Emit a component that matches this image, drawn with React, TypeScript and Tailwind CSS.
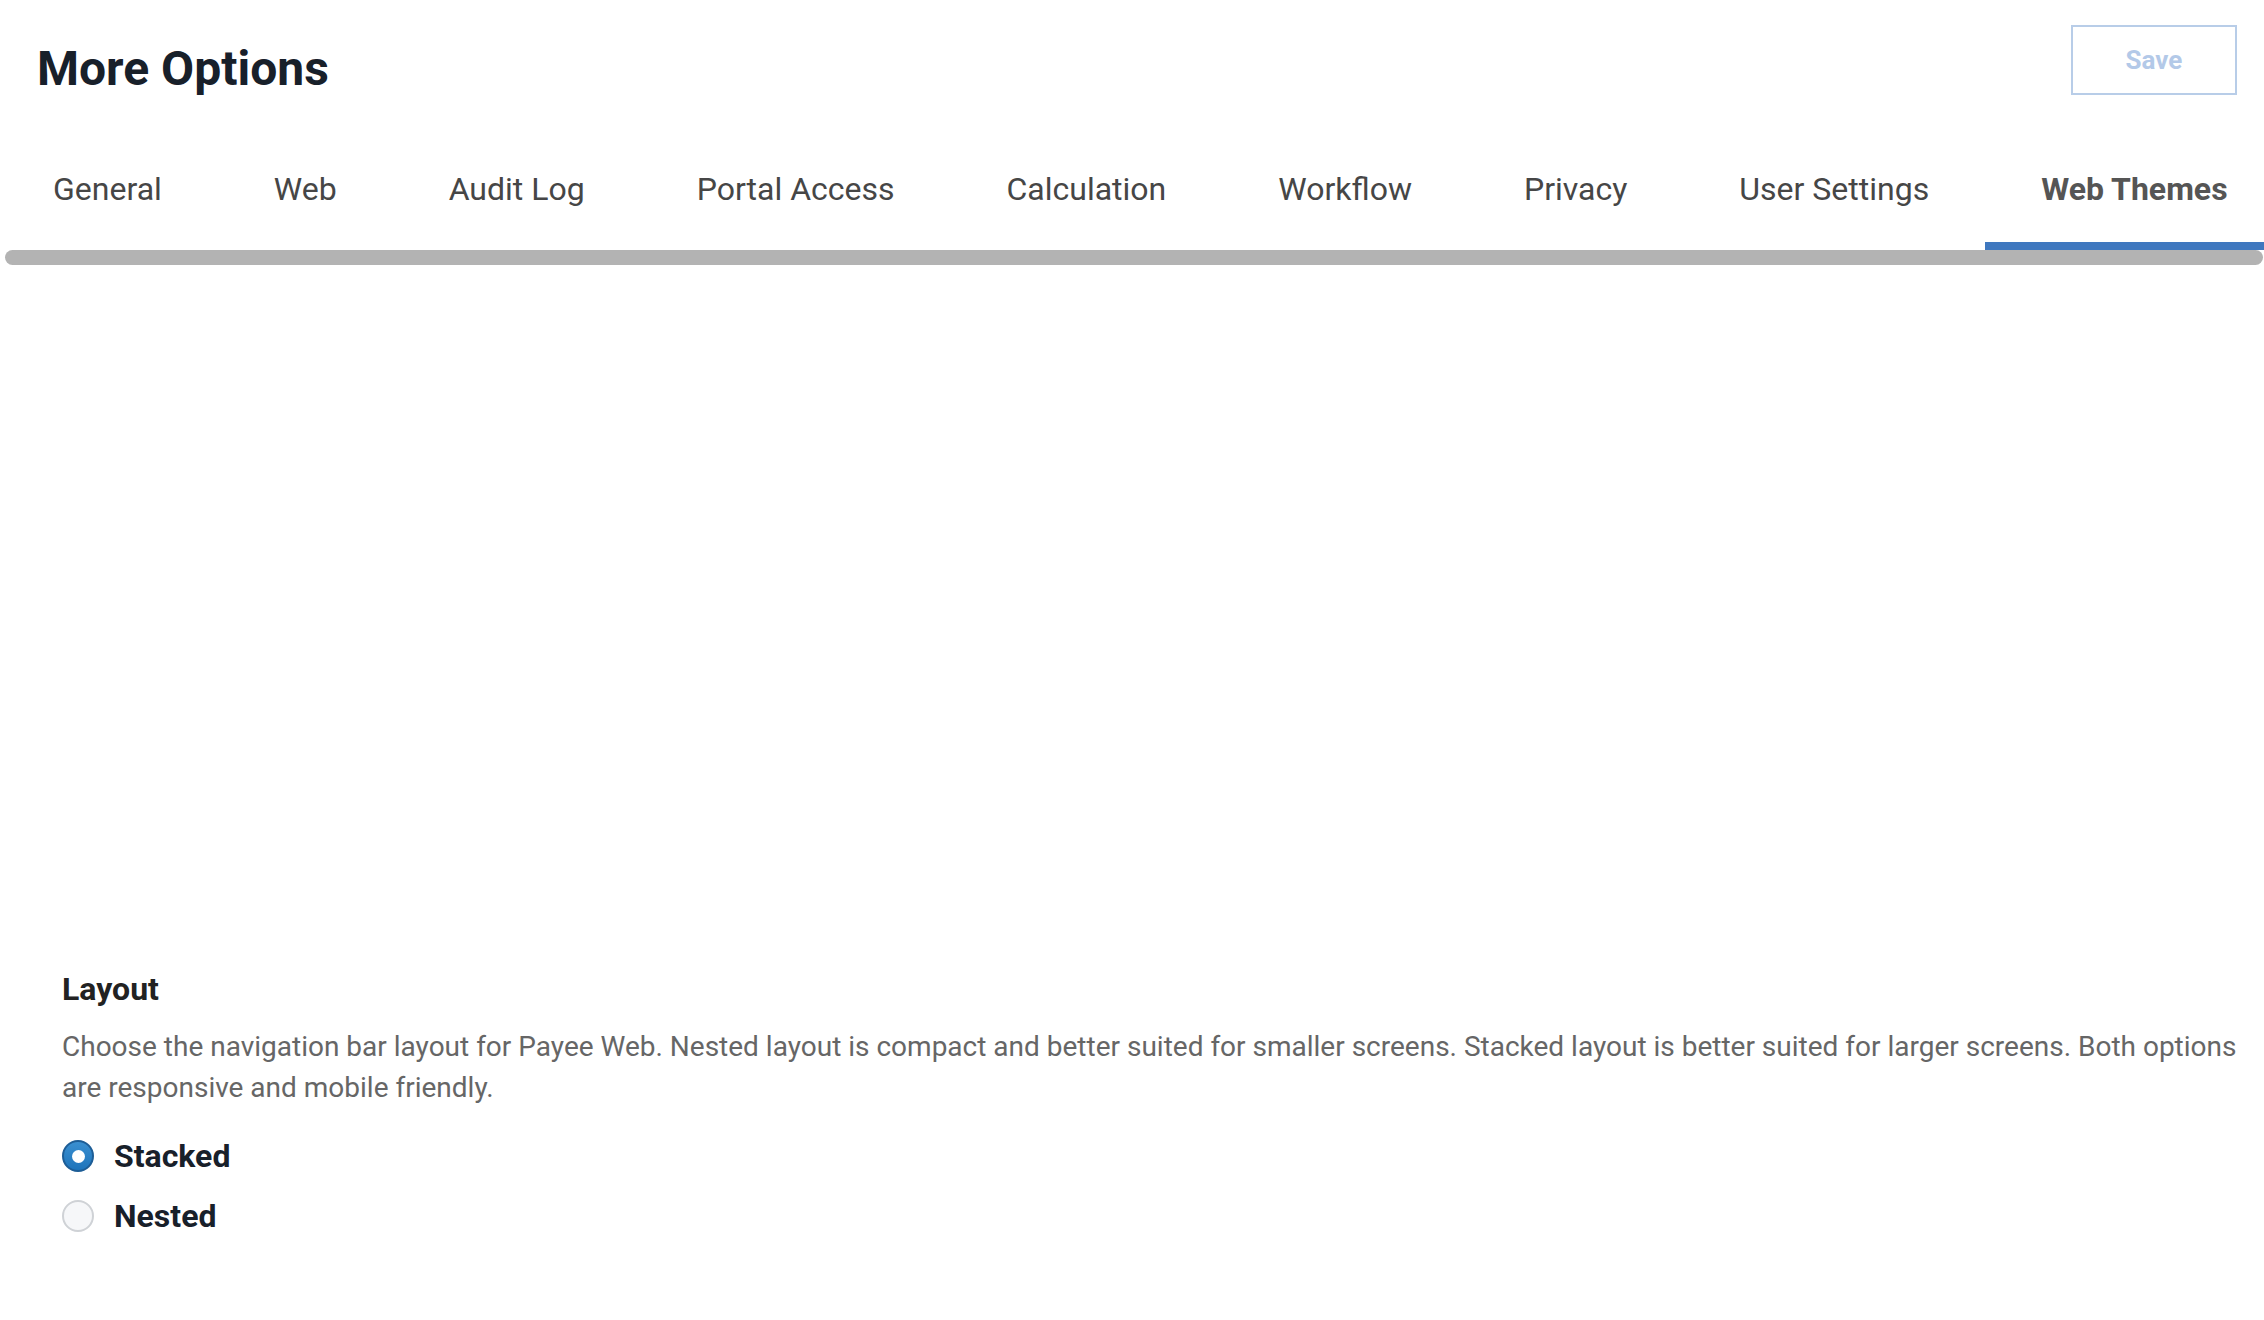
import React from "react";

const tabs = [
  "General",
  "Web",
  "Audit Log",
  "Portal Access",
  "Calculation",
  "Workflow",
  "Privacy",
  "User Settings",
  "Web Themes",
];

function Radio({ label, checked }: { label: string; checked?: boolean }) {
  return (
    <label className="flex h-[48px] items-center gap-[20px]">
      {checked ? (
        <span className="flex h-[32px] w-[32px] items-center justify-center rounded-full border-2 border-[#1d5d96] bg-gradient-to-b from-[#3a8fd0] to-[#1d74bb]">
          <span className="h-[13px] w-[13px] rounded-full bg-white" />
        </span>
      ) : (
        <span className="h-[32px] w-[32px] rounded-full border-2 border-[#cfd2d6] bg-[#f6f7f9]" />
      )}
      <span className="text-[32px] font-bold text-[#18202a]">{label}</span>
    </label>
  );
}

export default function App() {
  const active = "Web Themes";
  return (
    <div className="min-h-screen bg-white font-[Roboto,sans-serif]">
      <header className="flex h-[133px] items-start justify-between">
        <h1 className="mt-[40px] pl-[37px] text-[48px] leading-[58px] font-bold text-[#18202a]">
          More Options
        </h1>
        <button className="mt-[25px] mr-[27px] h-[70px] w-[166px] border-2 border-[#b8cde8] text-[26px] font-bold text-[#b3c9e8]">
          Save
        </button>
      </header>

      <nav className="flex overflow-hidden">
        <div className="-ml-[3px] flex shrink-0">
          {tabs.map((t) => (
            <button
              key={t}
              className={
                t === active
                  ? "h-[117px] shrink-0 border-b-8 border-[#3f78bf] px-[56px] pt-[3px] text-[32px] font-bold text-[#555555]"
                  : "h-[117px] shrink-0 border-b-8 border-transparent px-[56px] pt-[3px] text-[32px] text-[#464646]"
              }
            >
              {t}
            </button>
          ))}
        </div>
      </nav>
      <div className="ml-[5px] mr-[1px] h-[15px] rounded-full bg-[#b3b3b3]" />

      <section className="pt-[705px] pr-[20px] pl-[62px]">
        <h2 className="text-[32px] leading-[38px] font-bold text-[#222222]">Layout</h2>
        <p className="mt-[18px] text-[28px] leading-[41px] text-[#666666]">
          Choose the navigation bar layout for Payee Web. Nested layout is compact and better
          suited for smaller screens. Stacked layout is better suited for larger screens. Both
          options are responsive and mobile friendly.
        </p>
        <div className="mt-[24px] flex flex-col gap-[12px]">
          <Radio label="Stacked" checked />
          <Radio label="Nested" />
        </div>
      </section>
    </div>
  );
}
